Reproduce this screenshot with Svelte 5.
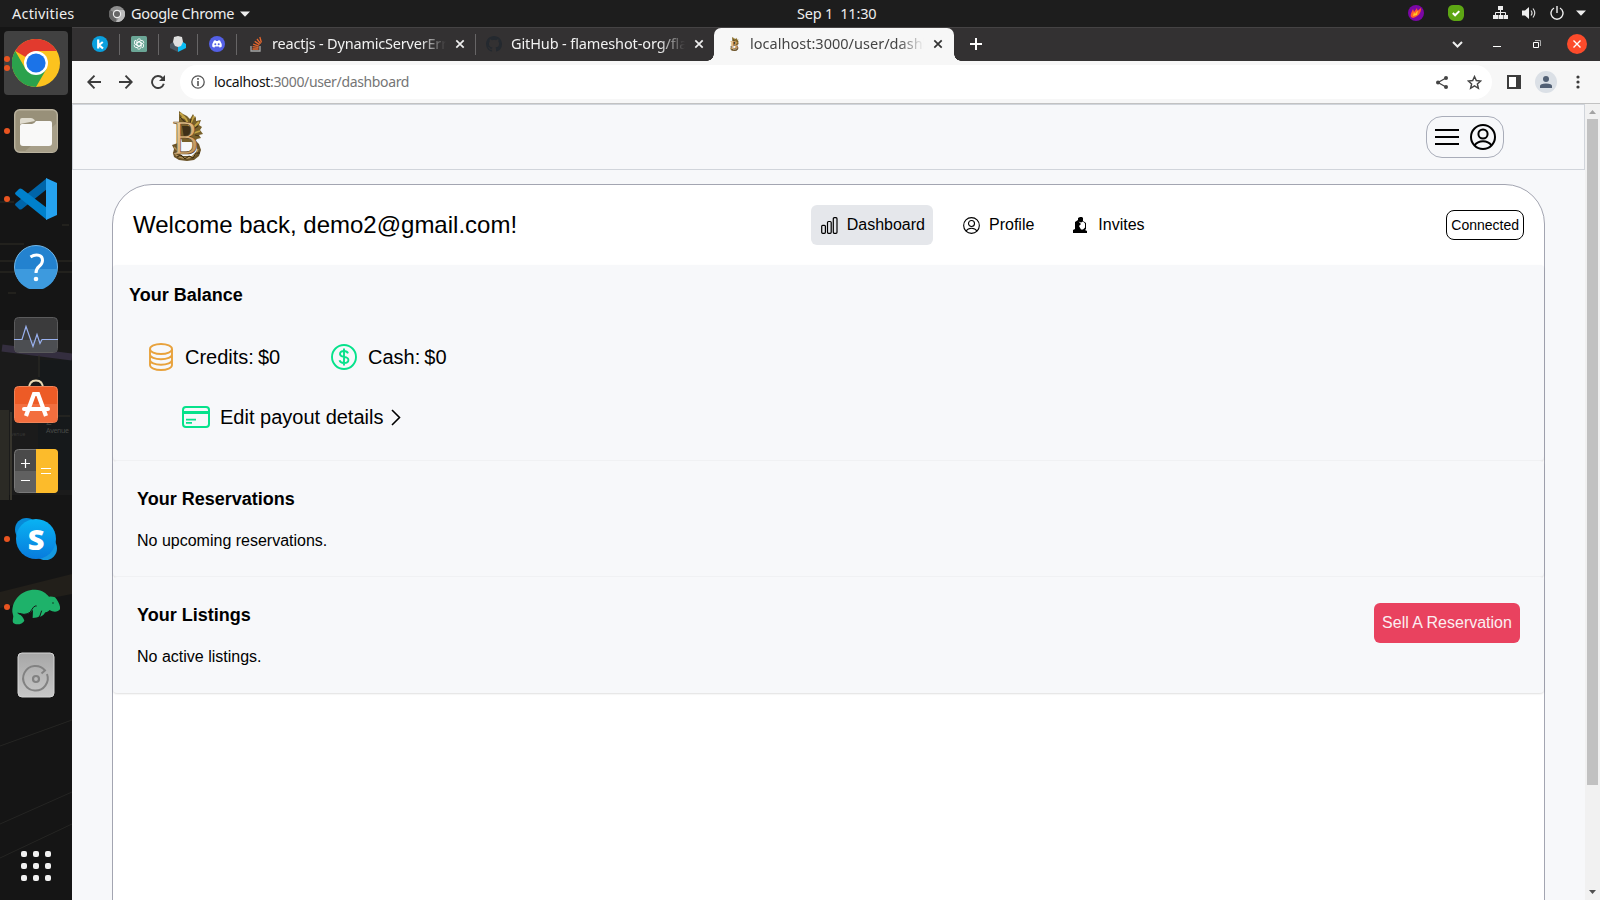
<script>
  const pinned = ['k', 'gpt', 'cube', 'discord'];
  const launchers = [
    { name: 'chrome', dots: 2, active: true },
    { name: 'files', dots: 1 },
    { name: 'code', dots: 1 },
    { name: 'help', dots: 0 },
    { name: 'monitor', dots: 0 },
    { name: 'software', dots: 0 },
    { name: 'calc', dots: 0 },
    { name: 'skype', dots: 1 },
    { name: 'manatee', dots: 1 },
    { name: 'disk', dots: 0 }
  ];
  const nav = [
    { name: 'Dashboard', active: true },
    { name: 'Profile' },
    { name: 'Invites' }
  ];
</script>

{#snippet person(size, sw)}
  <svg width={size} height={size} viewBox="0 0 26 26" fill="none" stroke="#000" stroke-width={sw}>
    <circle cx="13" cy="13" r="12" /><circle cx="13" cy="10" r="4.6" />
    <path d="M4.6 21.4C7 17.9 10 17.2 13 17.2s6 .7 8.4 4.2" />
  </svg>
{/snippet}

{#snippet logo(w, h, small)}
  <svg width={w} height={h} viewBox="0 0 32 50">
    <defs>
      <linearGradient id="gold" x1="0" y1="0" x2="1" y2="1">
        <stop offset="0" stop-color="#f3dcae" /><stop offset=".5" stop-color="#dfb67c" /><stop offset="1" stop-color="#b08045" />
      </linearGradient>
    </defs>
    <path d="M8 0l4 3 4 2 3 3 3-5 2 4 1-2 0 5 5-1-2 5 3 2-2 3 3 4-4 1 2 3-4 1-3 3H11l-3-13z" fill="#77602a" />
    <path d="M9 2l6 6 3 7M23 5l-4 9M28 11l-7 7M29 20l-6 2M14 6l-5 1" stroke="#c5a444" stroke-width="1.800" fill="none" />
    <path d="M9 6l7 7M20 8l-1 5M27 15l-6 4M28 25l-4-1M11 12h7" stroke="#43341a" stroke-width="1.200" fill="none" />
    <path d="M11 15h6q5 1 4 6-1 5-8 6z" fill="#3f3018" />
    <path d="M1 34l6-2v10l5 3 9 0 5-5-1-10 3 3 2 6-2 6-5 4-7 1-8-1-5-3-1-4 1-4z" fill="#6a5328" />
    <path d="M4 43q5 5 13 4 8-1 10-9M3 36l4 4" stroke="#b3935a" stroke-width="1.500" fill="none" />
    <path d="M6 46l4-2 4 4 4-3 4 2 3-5 4 0" stroke="#36280f" stroke-width="1" fill="none" />
    <text x="1.500" y="43" font-family="Liberation Serif, serif" font-weight={small ? 700 : 400} font-size="48" textLength="26" lengthAdjust="spacingAndGlyphs" fill="url(#gold)" stroke="#5a401d" stroke-width=".7">B</text>
  </svg>
{/snippet}

{#snippet cross(color)}
  <svg class="cross" width="10" height="10" viewBox="0 0 10 10"><path d="M1.3 1.3l7.4 7.4M8.7 1.3L1.3 8.7" stroke={color} stroke-width="1.7" /></svg>
{/snippet}

<div class="desktop">
  <header class="topbar">
    <span class="activities">Activities</span>
    <svg width="16" height="16" viewBox="0 0 16 16"><circle cx="8" cy="8" r="8" fill="#8f8f8f" /><path d="M8 8L1 4a8 8 0 0 0 6 12z" fill="#666" /><path d="M8 4h7a8 8 0 0 1-8 12l4-6z" fill="#bbb" /><circle cx="8" cy="8" r="4.2" fill="#eee" /><circle cx="8" cy="8" r="3" fill="#666" /></svg>
    <span class="appname">Google Chrome</span>
    <svg width="10" height="6" viewBox="0 0 10 6"><path d="M0 .5h10L5 5.8z" fill="#eee" /></svg>
    <span class="clock">Sep 1&nbsp; 11:30</span>
    <div class="tray">
      <span class="t40"><svg width="16" height="16" viewBox="0 0 16 16"><circle cx="8" cy="8" r="8" fill="#7b07a5" /><path d="M3 12C2 9 4 7 5 4l1 3 3-4 .4 3L13 3c0 5-2 8-8 10z" fill="#ff5a2c" /><path d="M5 11l1-4 1 2 3-4-1 5z" fill="#ffcd22" /></svg></span>
      <span class="t40"><svg width="16" height="16" viewBox="0 0 16 16"><path d="M5 0h6q5 1 5 6v5q-1 5-5 5H6q-5-1-6-6V4q1-4 5-4" fill="#5da614" /><path d="M4.8 8l2.3 2.3 4.2-4.2" stroke="#fff" stroke-width="2" fill="none" /></svg></span>
      <span class="t30"><svg width="15" height="14" viewBox="0 0 15 14" fill="#eee"><path d="M5 0h5v4H5zM0 9h5v4H0zM5.500 9h4.500v4H5.500zM10.500 9H15v4h-4.500z" /><path d="M7.500 4v5M2.500 9V6.500h10V9" stroke="#eee" fill="none" /></svg></span>
      <span class="t28"><svg width="15" height="14" viewBox="0 0 15 14"><path d="M0 4.500h3L7 1v12L3 9.500H0z" fill="#eee" /><path d="M9 4.500q2 2.500 0 5M11 2.500q3.500 4.500 0 9" stroke="#ddd" stroke-width="1.200" fill="none" /></svg></span>
      <span class="t26"><svg width="14" height="14" viewBox="0 0 14 14" fill="none" stroke="#eee" stroke-width="1.400"><path d="M4 2a6 6 0 1 0 6 0M7 0v7" /></svg></span>
      <span class="t22"><svg width="10" height="6" viewBox="0 0 10 6"><path d="M0 .5h10L5 5.800z" fill="#eee" /></svg></span>
    </div>
  </header>

  <div class="body">
    <aside class="dock">
      <svg class="wallpaper" width="72" height="873" viewBox="0 27 72 873">
        <rect y="330" width="72" height="165" fill="#1b1b1b" />
        <rect y="410" width="9" height="90" fill="#2b2a25" /><rect x="10" y="412" width="2" height="88" fill="#37352d" />
        <rect x="38" y="360" width="34" height="130" fill="#16191b" />
        <path d="M2 348l70 9" stroke="#342e3f" stroke-width="7" />
        <path d="M39 355v22M0 202h14M0 244h24M0 261h72M0 272h72M8 293h8M62 225h7M40 416h30" stroke="#302e26" />
        <path d="M0 592L72 574v20L0 608z" fill="#221f1a" />
        <path d="M0 746l72-26M0 824l72-32M0 858l72-34" stroke="#252523" />
        <text x="46" y="425" fill="#3e403e" font-size="10">2</text><text x="46" y="433" fill="#484a48" font-size="7" textLength="23">Avenue</text>
        <text x="11" y="436" fill="#363735" font-size="5">venue</text>
      </svg>
      {#each launchers as l}
        <div class="launcher" class:active={l.active}>
          {#if l.dots}<span class="dots">{#each Array(l.dots) as _}<i></i>{/each}</span>{/if}
          {#if l.name === 'chrome'}
            <svg width="48" height="48" viewBox="0 0 48 48"><circle cx="24" cy="24" r="24" fill="#fcc31e" /><path d="M24 24L3.200 12A24 24 0 0 1 44.800 12H24z" fill="#e23a2e" /><path d="M13.600 30L3.200 12A24 24 0 0 0 24 48l10.400-18z" fill="#2ba24c" /><circle cx="24" cy="24" r="12" fill="#fff" /><circle cx="24" cy="24" r="9.600" fill="#1b73e8" /></svg>
          {:else if l.name === 'files'}
            <svg width="44" height="44" viewBox="0 0 44 44"><rect x=".7" y=".7" width="42.600" height="42.600" rx="5" fill="#989079" stroke="#b9b29e" stroke-width="1.400" /><path d="M43 14v24q0 5-5 5H10z" fill="#a79f89" /><path d="M6 15v-4q0-2 2-2h9q2 0 3 1.500l1 1.500z" fill="#e0dccf" /><path d="M6 17q0-2 2-2h10q2 0 4-3h14q2 0 2 2v20q0 3-3 3H9q-3 0-3-3z" fill="#f9f9f8" /></svg>
          {:else if l.name === 'code'}
            <svg width="42" height="42" viewBox="0 0 42 42"><path d="M0 27l4 4q1 1 3 0L32 11V0L1 25q-1 1-1 2" fill="#0065a9" /><path d="M0 15l4-4q1-1 3 0l25 19v12L1 17q-1-1-1-2" fill="#0081cc" /><path d="M31 0l11 5v32l-11 5z" fill="#25a2ef" /></svg>
          {:else if l.name === 'help'}
            <svg width="44" height="44" viewBox="0 0 44 44"><circle cx="22" cy="22" r="21.500" fill="#2382cf" stroke="#72b7e8" /><path d="M1 24h42a21 21 0 0 1-42 0" fill="#3d9ade" /><path d="M16.500 12q3-2 6-2 6 0 6 5.500 0 3-3.500 6-3 2.500-3 6.500" fill="none" stroke="#fff" stroke-width="3" /><circle cx="22" cy="34" r="2.300" fill="#fff" /></svg>
          {:else if l.name === 'monitor'}
            <svg width="44" height="36" viewBox="0 0 44 36"><rect x=".5" y=".5" width="43" height="35" rx="4" fill="#3b3b3c" stroke="#5b5b5c" /><path d="M1 23h42v9q0 3-3 3H4q-3 0-3-3z" fill="#4c4e52" /><path d="M0 22.500h8l4-13 7 20 4-12 3 9 2-4h16" fill="none" stroke="#99b1ee" stroke-width="1.200" /></svg>
          {:else if l.name === 'software'}
            <svg class="bag" width="44" height="44" viewBox="0 0 44 44"><path d="M15 10q0-8.500 7-8.500t7 8.500" fill="none" stroke="#e8d8b2" stroke-width="1.800" /><rect x=".5" y="7.500" width="43" height="36" rx="4" fill="#ed5b26" stroke="#f08358" /><path d="M1 25h42v14q0 4-4 4H5q-4 0-4-4z" fill="#f36e3e" /><path d="M12 37l8-22h4l8 22" fill="none" stroke="#fff" stroke-width="4.200" /><rect x="8" y="28" width="28" height="4" rx="2" fill="#fff" /></svg>
          {:else if l.name === 'calc'}
            <svg width="44" height="44" viewBox="0 0 44 44"><rect x=".5" y=".5" width="43" height="43" rx="4" fill="#4a4a4a" stroke="#797979" /><path d="M1 22h21v21H5q-4 0-4-4z" fill="#606060" /><path d="M22 0h18q4 0 4 4v36q0 4-4 4H22z" fill="#fcbb2b" /><path d="M7 14.500h9M11.500 10v9M7 31.500h9M27 19.500h10M27 24.500h10" stroke="#fff" stroke-width="1.200" /></svg>
          {:else if l.name === 'skype'}
            <svg width="44" height="44" viewBox="0 0 44 44"><defs><linearGradient id="sky" x1="0" y1="0" x2="0" y2="1"><stop offset="0" stop-color="#09b3f3" /><stop offset="1" stop-color="#087bdd" /></linearGradient></defs><circle cx="12.500" cy="12.500" r="11.500" fill="#078ad7" /><circle cx="31.500" cy="31.500" r="11.500" fill="#1498df" /><circle cx="22" cy="22" r="20" fill="url(#sky)" /><text x="22" y="32.500" text-anchor="middle" font-family="Open Sans, sans-serif" font-weight="800" font-size="29" fill="#fff">S</text></svg>
          {:else if l.name === 'manatee'}
            <svg width="48" height="36" viewBox="36 55 144 108"><path d="M37 124C36 87 65 56 106 57C128 57 139 69 147 78Q156 77 165 80C173 90 182 103 180 116C174 124 161 126 149 118C144 124 138 126 127 125C121 134 118 142 98 142L99 117C88 132 70 133 61 127L55 130C65 133 71 142 73 150C68 160 49 165 40 157C35 149 42 140 39 133Z" fill="#1eb26a" /><path d="M119 138l7-18 11 1q-4 14-18 17" fill="#1eb26a" /><path d="M53 127q20 9 37-2l10-15q6-6 10-4M119 138l6-18" fill="none" stroke="#171717" stroke-width="3" /><circle cx="159" cy="97" r="2.500" fill="#123524" /></svg>
          {:else if l.name === 'disk'}
            <svg width="38" height="46" viewBox="0 0 38 46"><defs><linearGradient id="dk" x1="0" y1="0" x2="0" y2="1"><stop offset="0" stop-color="#a7a7a7" /><stop offset="1" stop-color="#c7c7c7" /></linearGradient></defs><rect x="1" y="1" width="36" height="44" rx="4" fill="url(#dk)" stroke="#d5d5d5" /><path d="M30 22A12.300 12.300 0 1 1 28 18.500L24.500 21.500" fill="none" stroke="#828282" stroke-width="2" /><circle cx="19" cy="27" r="3" fill="none" stroke="#828282" stroke-width="2.200" /></svg>
          {/if}
        </div>
      {/each}
      <div class="apps">{#each Array(9) as _}<i></i>{/each}</div>
    </aside>

    <div class="window">
      <div class="strip">
        {#each pinned as p}
          <div class="pin">
            {#if p === 'k'}
              <svg width="16" height="16" viewBox="0 0 16 16"><circle cx="8" cy="8" r="8" fill="#0aa0de" /><path d="M6.200 3.500v9M10.800 6L7 9l4 3.500" stroke="#fff" stroke-width="2.200" fill="none" /></svg>
            {:else if p === 'gpt'}
              <svg width="16" height="16" viewBox="0 0 16 16" fill="none" stroke="#fff" stroke-width=".9"><rect width="16" height="16" rx="1.500" fill="#6ba696" stroke="none" />{#each [0, 60, 120, 180, 240, 300] as a}<path d="M8 5.600L10.100 6.800v4.400a2.400 2.400 0 0 1-3.800 1.400" transform="rotate({a} 8 8)" />{/each}</svg>
            {:else if p === 'cube'}
              <svg width="16" height="16" viewBox="0 0 16 16"><path d="M0 8l3-2 5 4v6l-8-4z" fill="#4b5660" /><path d="M8 10l5-4 3 2v4l-8 4z" fill="#0bbdf5" /><path d="M4 1l4-1 4 1 1 5-2 4-3 1-3-1-2-4z" fill="#dfdfdf" /></svg>
            {:else}
              <svg width="16" height="16" viewBox="0 0 16 16"><circle cx="8" cy="8" r="8" fill="#5460e6" /><path d="M5 4.500l1.500-.2.5.7h2l.5-.7 1.500.2q2 3 1.800 6l-2 1.200-.8-1.200H6l-.8 1.200-2-1.200q-.2-3 1.800-6" fill="#fff" /><circle cx="6.300" cy="8.300" r="1" fill="#5460e6" /><circle cx="9.700" cy="8.300" r="1" fill="#5460e6" /></svg>
            {/if}
          </div>
        {/each}
        <div class="tab so">
          <svg width="16" height="16" viewBox="0 0 16 16" fill="none"><path d="M3 10v5h9v-5" stroke="#a6a6a6" stroke-width="1.300" /><path d="M4.500 13h6M4.600 10.700l6 .7M5.200 8.200l5.600 1.800M6.700 5.400l4.900 3.200M9 3l3.600 4.600M11.800 1l1.600 5.500" stroke="#e9672c" stroke-width="1.300" /></svg>
          <span class="title">reactjs - DynamicServerError</span>{@render cross('#eee')}
        </div>
        <div class="tab gh">
          <svg width="16" height="16" viewBox="0 0 16 16"><path fill="#24292f" d="M8 0C3.580 0 0 3.580 0 8c0 3.540 2.290 6.530 5.470 7.590.4.070.55-.17.55-.38v-1.490c-2.010.37-2.530-.49-2.690-.94-.09-.23-.48-.94-.82-1.130-.28-.15-.68-.52-.01-.53.63-.01 1.080.58 1.230.82.72 1.210 1.870.87 2.330.66.07-.52.28-.87.51-1.070-1.780-.2-3.640-.89-3.640-3.950 0-.87.31-1.590.82-2.150-.08-.2-.36-1.020.08-2.120 0 0 .67-.21 2.200.82a7.600 7.600 0 0 1 4 0c1.530-1.040 2.200-.82 2.200-.82.44 1.100.16 1.920.08 2.120.51.56.82 1.270.82 2.150 0 3.070-1.870 3.750-3.650 3.950.29.25.54.73.54 1.480v2.200c0 .21.15.46.55.38A8 8 0 0 0 16 8c0-4.420-3.580-8-8-8" /></svg>
          <span class="title">GitHub - flameshot-org/flameshot</span>{@render cross('#eee')}
        </div>
        <div class="tab current">
          <span class="fav">{@render logo(9, 14, true)}</span>
          <span class="title">localhost:3000/user/dashboard</span>{@render cross('#333')}
        </div>
        <svg class="plus" width="12" height="12" viewBox="0 0 12 12"><path d="M6 0v12M0 6h12" stroke="#fff" stroke-width="2" /></svg>
        <div class="controls">
          <span><svg width="11" height="7" viewBox="0 0 11 7"><path d="M1 1l4.500 4.500L10 1" fill="none" stroke="#eee" stroke-width="2" /></svg></span>
          <span><svg width="8" height="8" viewBox="0 0 8 8"><path d="M0 6.500h8" stroke="#fff" /></svg></span>
          <span><svg width="8" height="8" viewBox="0 0 8 8" fill="none"><path d="M.5 2.500h5v5h-5z" stroke="#fff" /><path d="M2 .5h5.500V6" stroke="#aaa" /></svg></span>
          <span><b class="close"><svg width="8" height="8" viewBox="0 0 8 8"><path d="M.5.5l7 7M7.500.5l-7 7" stroke="#fff" stroke-width="1.400" /></svg></b></span>
        </div>
      </div>

      <div class="toolbar">
        <span class="tool"><svg width="14" height="14" viewBox="0 0 14 14" fill="none" stroke="#3c3c3c" stroke-width="1.900"><path d="M14 7H1.500M7.500.7L1.300 7l6.200 6.300" /></svg></span>
        <span class="tool"><svg width="14" height="14" viewBox="0 0 14 14" fill="none" stroke="#3c3c3c" stroke-width="1.900"><path d="M0 7h12.500M6.500.7L12.700 7l-6.200 6.300" /></svg></span>
        <span class="tool"><svg width="14" height="14" viewBox="0 0 14 14"><path d="M12.800 8.800A6 6 0 1 1 11.500 3" fill="none" stroke="#3c3c3c" stroke-width="1.900" /><path d="M14 0v6H8z" fill="#3c3c3c" /></svg></span>
        <div class="omni">
          <svg width="14" height="14" viewBox="0 0 14 14"><circle cx="7" cy="7" r="6.200" fill="none" stroke="#555" stroke-width="1.300" /><path d="M7 3v1.700M7 6v5" stroke="#555" stroke-width="1.600" /></svg>
          <span class="url"><b>localhost</b>:3000/user/dashboard</span>
          <span class="tool right"><svg width="12" height="13" viewBox="0 0 12 13"><path d="M10 2L2 6.500 10 11" fill="none" stroke="#444" stroke-width="1.300" /><circle cx="10" cy="2" r="2" fill="#444" /><circle cx="2" cy="6.500" r="2" fill="#444" /><circle cx="10" cy="11" r="2" fill="#444" /></svg></span>
          <span class="tool"><svg width="15" height="15" viewBox="0 0 24 24"><path d="M12 2.500l2.900 6.400 7 .7-5.300 4.700 1.600 6.900-6.200-3.700-6.200 3.700 1.600-6.900-5.300-4.700 7-.7z" fill="none" stroke="#444" stroke-width="2.300" /></svg></span>
        </div>
        <span class="tool"><svg width="14" height="14" viewBox="0 0 14 14"><path d="M0 0h14v14H0z" fill="#3c3c3c" /><path d="M2 2h7v10H2z" fill="#fff" /></svg></span>
        <span class="tool"><span class="avatar"><svg width="12" height="12" viewBox="0 0 12 12" fill="#526074"><circle cx="6" cy="3" r="3" /><path d="M0 12v-2q0-2.500 6-2.500t6 2.500v2z" /></svg></span></span>
        <span class="tool"><svg width="4" height="14" viewBox="0 0 4 14" fill="#3c3c3c"><circle cx="2" cy="2" r="1.600" /><circle cx="2" cy="7" r="1.600" /><circle cx="2" cy="12" r="1.600" /></svg></span>
      </div>

      <div class="viewport">
        <div class="page">
          <nav class="site">
            {@render logo(32, 50, false)}
            <button class="menu">
              <svg width="24" height="16" viewBox="0 0 24 16"><path d="M0 1h24M0 8h24M0 15h24" stroke="#000" stroke-width="2" /></svg>
              {@render person(26, 2)}
            </button>
          </nav>
          <main class="card">
            <div class="head">
              <h1>Welcome back, demo2@gmail.com!</h1>
              <div class="links">
                {#each nav as n}
                  <a class:active={n.active}>
                    <span class="ico">
                      {#if n.name === 'Dashboard'}
                        <svg width="17" height="17" viewBox="0 0 17 17" fill="none" stroke="#000" stroke-width="1.200"><rect x=".7" y="8.300" width="3.700" height="8" rx="1" /><rect x="6.500" y="4.500" width="3.700" height="11.800" rx="1" /><rect x="12.300" y=".7" width="3.700" height="15.600" rx="1" /></svg>
                      {:else if n.name === 'Profile'}
                        {@render person(17, 1.700)}
                      {:else}
                        <svg width="14" height="16" viewBox="0 0 14 16"><path d="M0 16v-3l2-1V5l3-2V1l2-1h2l1 1v3l3 2v6l-1 1 2 1v2z" /><path d="M5.500 4.500l2.500 1 2-1 2 2v4l-2 2H8L6 9l2-2z" fill="#fff" /></svg>
                      {/if}
                    </span>{n.name}
                  </a>
                {/each}
              </div>
              <span class="connected">Connected</span>
            </div>

            <section class="balance">
              <h2>Your Balance</h2>
              <div class="amounts">
                <span class="credits"><svg width="24" height="28" viewBox="0 0 24 28" fill="none" stroke="#e8a23c" stroke-width="1.900"><ellipse cx="12" cy="6" rx="11" ry="5" /><path d="M1 6v16c0 2.800 5 5 11 5s11-2.200 11-5V6M1 11.500c0 2.700 5 4.800 11 4.800s11-2.100 11-4.800M1 17c0 2.700 5 4.800 11 4.800S23 19.700 23 17" /></svg>Credits: $0</span>
                <span class="cash"><svg width="26" height="26" viewBox="0 0 26 26" fill="none" stroke="#06e28b" stroke-width="1.900"><circle cx="13" cy="13" r="12" /><path d="M17 9.300C16.300 7.700 15 7 13 7c-2.600 0-4 1.200-4 3 0 4.300 8.400 1.500 8.400 6 0 1.900-1.800 3-4.400 3-2.400 0-4-1-4.500-2.800M13 4.500v17" /></svg>Cash: $0</span>
              </div>
              <div class="payout">
                <svg width="28" height="22" viewBox="0 0 28 22" fill="none" stroke="#06e28b" stroke-width="2"><rect x="1" y="1" width="26" height="20" rx="3" /><path d="M1 6.500h26" stroke-width="3" /><path d="M4 13.700h10M4 16.800h6" stroke-width="1.700" /></svg>
                <span>Edit payout details</span>
                <svg width="10" height="17" viewBox="0 0 10 17"><path d="M1 1l7.500 7.500L1 16" fill="none" stroke="#000" stroke-width="1.600" /></svg>
              </div>
            </section>
            <section>
              <div><h2>Your Reservations</h2><p>No upcoming reservations.</p></div>
            </section>
            <section>
              <div><h2>Your Listings</h2><p>No active listings.</p></div>
              <button class="sell">Sell A Reservation</button>
            </section>
          </main>
        </div>
        <div class="scroll">
          <svg width="7" height="4" viewBox="0 0 7 4"><path d="M0 4l3.500-4L7 4z" fill="#a3a3a3" /></svg>
          <div class="thumb"></div>
          <svg class="down" width="7" height="4" viewBox="0 0 7 4"><path d="M0 0h7L3.500 4z" fill="#505050" /></svg>
        </div>
      </div>
    </div>
  </div>
</div>

<style>
  :global(body) { margin: 0; overflow: hidden; }
  .desktop, .desktop :global(*) { box-sizing: border-box; }
  .desktop { width: 1600px; height: 900px; display: flex; flex-direction: column; overflow: hidden; background: #151515; font-family: 'Noto Sans', sans-serif; }
  svg { display: block; flex: none; }
  h1, h2, p { margin: 0; }
  button { font: inherit; padding: 0; border: 0; background: none; }

  .topbar { height: 27px; flex: none; display: flex; align-items: center; background: #1d1d1d; color: #eee; font-size: 14.500px; padding-left: 12px; white-space: nowrap; }
  .activities, .appname, .clock { padding-bottom: 2px; }
  .activities { width: 97px; letter-spacing: .2px; }
  .appname { width: 104px; margin: 0 5px 0 6px; letter-spacing: -.3px; }
  .clock { margin-left: 547px; width: 82px; letter-spacing: -.2px; }
  .tray { margin-left: auto; padding-right: 9px; display: flex; }
  .tray span { display: flex; justify-content: center; align-items: center; padding-bottom: 1px; }
  .t40 { width: 40px; } .t30 { width: 30px; } .t28 { width: 29px; } .t26 { width: 26px; } .t22 { width: 21px; }
  .t40 + .t30 { margin-left: 9px; }

  .body { flex: 1; display: flex; min-height: 0; }
  .dock { position: relative; width: 72px; flex: none; padding: 4px; display: flex; flex-direction: column; gap: 4px; background: #151515; }
  .wallpaper { position: absolute; left: 0; top: 0; }
  .launcher { position: relative; width: 64px; height: 64px; flex: none; display: flex; align-items: center; justify-content: center; border-radius: 4px; }
  .launcher.active { background: #414141; }
  .bag { margin-bottom: 4px; }
  .dots { position: absolute; left: 0; top: 0; height: 64px; display: flex; flex-direction: column; justify-content: center; gap: 3px; }
  .dots i { width: 6px; height: 6px; border-radius: 50%; background: #e95420; }
  .apps { position: relative; margin-top: auto; margin-bottom: 15px; align-self: center; display: grid; grid-template-columns: repeat(3, 6px); gap: 6px; }
  .apps i { height: 6px; border-radius: 2px; background: #f2f2f2; }

  .window { flex: 1; min-width: 0; display: flex; flex-direction: column; }
  .strip { height: 34px; flex: none; display: flex; background: #333132; border-top: 1px solid #454344; padding-left: 9px; color: #f1f1f1; font-size: 14.500px; }
  .pin { width: 39px; display: flex; align-items: center; justify-content: center; position: relative; padding: 0 2px 1px 0; }
  .pin::after, .so::after { content: ''; position: absolute; right: 0; top: 6px; height: 21px; width: 1px; background: #676566; }
  .tab { position: relative; display: flex; align-items: center; flex: none; padding-bottom: 1px; }
  .so { width: 239px; padding-left: 11px; }
  .gh { width: 238px; padding-left: 10px; }
  .title { width: 174px; overflow: hidden; white-space: nowrap; line-height: 24px; padding-bottom: 2px; letter-spacing: -.1px; -webkit-mask-image: linear-gradient(90deg, #000 calc(100% - 26px), transparent); mask-image: linear-gradient(90deg, #000 calc(100% - 26px), transparent); }
  .so .title { margin-left: 8px; letter-spacing: -.2px; }
  .gh .title { margin-left: 9px; letter-spacing: -.12px; }
  .cross { margin-left: 9px; }
  .current { width: 240px; padding-left: 12px; background: #f7f7f7; color: #454545; border-radius: 7px 7px 0 0; }
  .current::before, .current::after { content: ''; position: absolute; bottom: 0; width: 7px; height: 7px; }
  .current::before { left: -7px; background: radial-gradient(circle at 0 0, transparent 6.500px, #f7f7f7 7px); }
  .current::after { right: -7px; background: radial-gradient(circle at 100% 0, transparent 6.500px, #f7f7f7 7px); }
  .fav { width: 16px; display: flex; justify-content: center; }
  .current .title { margin-left: 8px; letter-spacing: .02px; }
  .plus { margin: 10px 0 0 16px; }
  .controls { margin-left: auto; padding-right: 3px; display: flex; }
  .controls span { width: 40px; display: flex; align-items: center; justify-content: center; padding-bottom: 1px; }
  .close { width: 20px; height: 20px; border-radius: 50%; background: #fc4b2b; display: flex; align-items: center; justify-content: center; }

  .toolbar { height: 43px; flex: none; display: flex; align-items: center; padding: 0 6px; background: #f7f7f7; border-bottom: 1px solid #c2c2c2; }
  .tool { width: 32px; display: flex; justify-content: center; }
  .omni { flex: 1; margin: 0 6px; height: 34px; border-radius: 17px; background: #fff; display: flex; align-items: center; padding: 0 2px 0 11px; }
  .url { margin-left: 9px; font-size: 14px; color: #757575; letter-spacing: -.35px; padding-bottom: 2px; }
  .url b { font-weight: 400; color: #111; }
  .right { margin-left: auto; }
  .avatar { width: 22px; height: 22px; border-radius: 50%; background: #dbe0e6; display: flex; align-items: center; justify-content: center; }

  .viewport { flex: 1; min-height: 0; display: flex; background: #f7f8fa; }
  .page { flex: 1; min-width: 0; overflow: hidden; font-family: 'Liberation Sans', Arial, sans-serif; color: #000; }
  .site { height: 66px; border: 1px solid #d1d5db; display: flex; align-items: center; justify-content: space-between; padding: 0 80px 0 98px; }
  .site > svg { margin-bottom: 2px; }
  .menu { width: 78px; height: 42px; border: 1px solid #a9adb9; border-radius: 16px; display: flex; align-items: center; justify-content: center; gap: 11px; }
  .card { margin: 14px 40px 0; height: 900px; border: 1px solid #a3a5b1; border-radius: 40px 40px 0 0; background: #fff; }
  .head { height: 80px; padding: 0 20px; display: flex; align-items: center; justify-content: space-between; }
  h1 { font-size: 24px; font-weight: 400; line-height: 32px; }
  .links { display: flex; gap: 20px; }
  .links a { height: 40px; padding: 0 8px; border-radius: 6px; display: flex; align-items: center; gap: 8px; font-size: 16px; }
  .links a.active { background: #e5e7eb; }
  .ico { width: 20px; display: flex; justify-content: center; }
  .active .ico { padding-left: 1px; }
  .connected { height: 30px; border: 1px solid #000; border-radius: 8px; padding: 0 4px; line-height: 28px; font-size: 14px; }
  section { height: 116px; padding: 24px; display: flex; justify-content: space-between; align-items: flex-start; background: #f7f8fa; border-radius: 4px; box-shadow: 0 1px 2px rgba(0, 0, 0, .13); }
  section:not(:last-child) { border-bottom: 1px solid #f1f2f4; }
  h2 { font-size: 18px; line-height: 28px; font-weight: 700; }
  p { margin-top: 16px; font-size: 16px; line-height: 24px; }
  .balance { height: 196px; padding: 16px; flex-direction: column; justify-content: flex-start; font-size: 20px; line-height: 28px; }
  .amounts { display: flex; margin: 34px 0 0 20px; }
  .amounts span { display: flex; align-items: center; height: 28px; word-spacing: -1.500px; }
  .credits { width: 182px; gap: 12px; }
  .cash { gap: 11px; }
  .payout { display: flex; align-items: center; margin: 32px 0 0 53px; }
  .payout span { margin: 0 8px 0 10px; }
  .sell { margin-top: 2px; width: 146px; height: 40px; border-radius: 6px; background: #e9425f; color: #fbeef1; font-size: 16px; }

  .scroll { width: 15px; flex: none; background: #f1f1f1; display: flex; flex-direction: column; align-items: center; padding-top: 6px; }
  .thumb { width: 11px; height: 666px; margin-top: 5px; background: #c1c1c1; }
  .down { margin: auto 0 6px; }
</style>
